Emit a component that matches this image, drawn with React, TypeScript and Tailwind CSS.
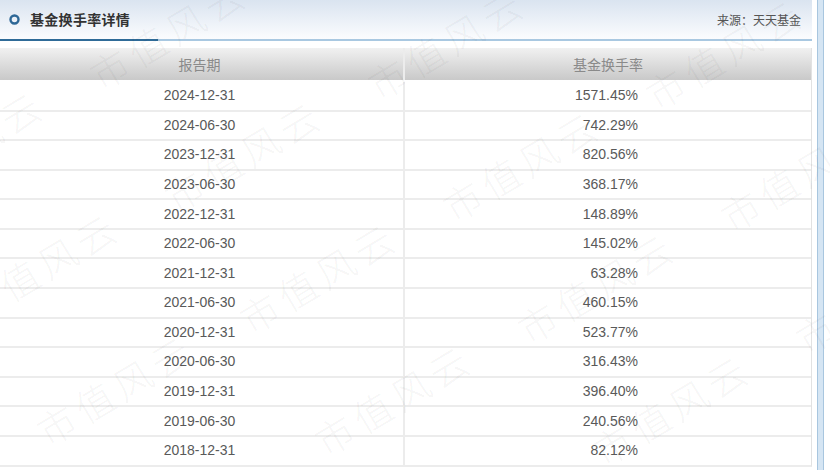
import React from "react";

const rows = [
  { date: "2024-12-31", rate: "1571.45%" },
  { date: "2024-06-30", rate: "742.29%" },
  { date: "2023-12-31", rate: "820.56%" },
  { date: "2023-06-30", rate: "368.17%" },
  { date: "2022-12-31", rate: "148.89%" },
  { date: "2022-06-30", rate: "145.02%" },
  { date: "2021-12-31", rate: "63.28%" },
  { date: "2021-06-30", rate: "460.15%" },
  { date: "2020-12-31", rate: "523.77%" },
  { date: "2020-06-30", rate: "316.43%" },
  { date: "2019-12-31", rate: "396.40%" },
  { date: "2019-06-30", rate: "240.56%" },
  { date: "2018-12-31", rate: "82.12%" },
];

// watermark lattice: centre of the first glyph of each "市值风云"
function watermarkSpots() {
  const spots: { x: number; y: number }[] = [];
  for (let i = -4; i <= 4; i++) {
    for (let j = -2; j <= 3; j++) {
      const x = 187 + i * 75 + j * 278;
      const y = 200 + i * 122 + j * 10;
      if (x > -200 && x < 850 && y > -40 && y < 520) spots.push({ x, y });
    }
  }
  return spots;
}

const cjk = "font-['Noto_Sans_CJK_SC','Noto_Sans',sans-serif]";
const latin = "font-['Liberation_Sans',Arial,sans-serif]";

export default function App() {
  return (
    <div className="relative w-[830px] h-[470px] overflow-hidden bg-white flex">
      <div className="w-[812px] flex flex-col">
        {/* title bar */}
        <div className="h-[39px] flex items-center justify-between bg-gradient-to-b from-[#dae4f0] to-[#fbfcfe] pl-[9px] pr-[11px]">
          <div className="flex items-center gap-[10px]">
            <svg width="11" height="11" viewBox="0 0 11 11">
              <circle cx="5.5" cy="5.5" r="4" fill="none" stroke="#2d6796" strokeWidth="2.4" />
            </svg>
            <span className={`${cjk} text-[14px] font-bold text-[#333] tracking-[0.3px]`}>基金换手率详情</span>
          </div>
          <span className={`${cjk} text-[12px] text-[#555] mt-[1px]`}>来源：天天基金</span>
        </div>
        <div className="flex h-[2px]">
          <div className="w-[158px] bg-[#2f6b98]" />
          <div className="flex-1 bg-[#a9c8e1]" />
        </div>

        {/* table */}
        <div className="mt-[7px] border-r border-b-2 border-r-[#e2e2e2] border-b-[#ececec]">
          <div className="flex h-[32px] bg-gradient-to-b from-[#f1f1f1] to-[#c9c9c9] text-[14px] text-[#8a8a8a]">
            <div className={`${cjk} w-[405px] pr-1 flex items-center justify-center border-r-2 border-[#ececec]`}>报告期</div>
            <div className={`${cjk} flex-1 flex items-center justify-center`}>基金换手率</div>
          </div>
          {rows.map((r, i) => (
            <div
              key={r.date}
              className={`${latin} flex h-[29.58px] text-[14px] text-[#595959] ${i > 0 ? "border-t-2 border-[#ececec]" : "pt-[2px]"}`}
            >
              <div className="w-[405px] pr-1 flex items-center justify-center border-r-2 border-[#ececec]">{r.date}</div>
              <div className="flex-1 flex items-center justify-end pr-[173px]">{r.rate}</div>
            </div>
          ))}
        </div>
      </div>

      {/* right frame edge */}
      <div className="ml-[5px] w-[7px] h-full border-x border-[#a8c6df] bg-[#d5e5f3]" />

      {/* watermark */}
      <div className="pointer-events-none absolute inset-0">
        {watermarkSpots().map((p, k) => (
          <span
            key={k}
            className={`${cjk} absolute origin-left whitespace-nowrap text-[38px] font-light leading-none tracking-[6px] text-[#000]/[0.055] -rotate-[31deg]`}
            style={{ left: p.x - 19, top: p.y - 19 }}
          >
            市值风云
          </span>
        ))}
      </div>
    </div>
  );
}
